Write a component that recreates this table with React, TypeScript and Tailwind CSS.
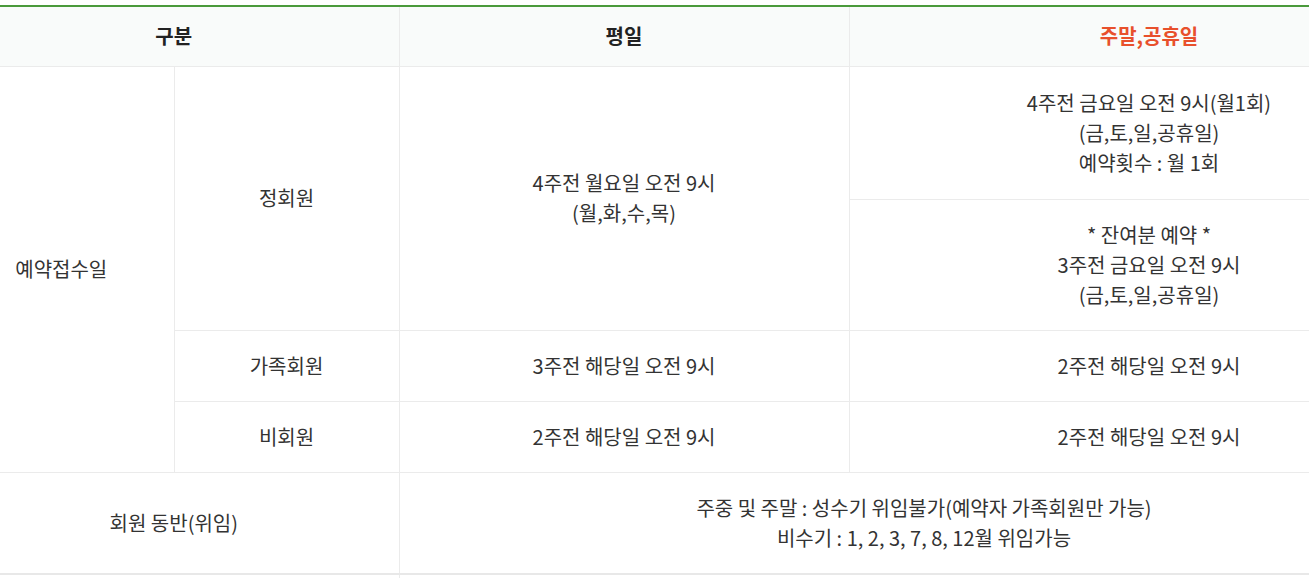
import React from 'react';

const cell = 'border border-[#ebebeb] text-center align-middle';

const App: React.FC = () => {
  return (
    <div className="w-full overflow-hidden bg-white pt-[5px] font-['Noto_Sans_CJK_KR','Noto_Sans',sans-serif] text-[20px] leading-[30px] text-[#333]">
      {/* table is wider than the window and scrolled a little to the right */}
      <table className="ml-[-51px] w-[1500px] table-fixed border-collapse border-t-2 border-t-[#4a9a3b]">
        <colgroup>
          <col className="w-[225px]" />
          <col className="w-[225px]" />
          <col className="w-[450px]" />
          <col className="w-[600px]" />
        </colgroup>
        <thead>
          <tr className="h-[60px] bg-[#f9fbfa]">
            <th colSpan={2} className={`${cell} border-l-0 border-t-0 font-bold text-[#222]`}>구분</th>
            <th className={`${cell} border-t-0 font-bold text-[#222]`}>평일</th>
            <th className={`${cell} border-t-0 font-bold text-[#e8502c]`}>주말,공휴일</th>
          </tr>
        </thead>
        <tbody>
          <tr className="h-[133px]">
            <td rowSpan={4} className={`${cell} border-l-0`}>예약접수일</td>
            <td rowSpan={2} className={cell}>정회원</td>
            <td rowSpan={2} className={cell}>
              4주전 월요일 오전 9시
              <br />
              (월,화,수,목)
            </td>
            <td className={cell}>
              4주전 금요일 오전 9시(월1회)
              <br />
              (금,토,일,공휴일)
              <br />
              예약횟수 : 월 1회
            </td>
          </tr>
          <tr className="h-[131px]">
            <td className={cell}>
              * 잔여분 예약 *
              <br />
              3주전 금요일 오전 9시
              <br />
              (금,토,일,공휴일)
            </td>
          </tr>
          <tr className="h-[71px]">
            <td className={cell}>가족회원</td>
            <td className={cell}>3주전 해당일 오전 9시</td>
            <td className={cell}>2주전 해당일 오전 9시</td>
          </tr>
          <tr className="h-[71px]">
            <td className={cell}>비회원</td>
            <td className={cell}>2주전 해당일 오전 9시</td>
            <td className={cell}>2주전 해당일 오전 9시</td>
          </tr>
          <tr className="h-[102px]">
            <td colSpan={2} className={`${cell} border-l-0 border-b-2 border-b-[#e8e8e8]`}>회원 동반(위임)</td>
            <td colSpan={2} className={`${cell} border-b-2 border-b-[#e8e8e8]`}>
              주중 및 주말 : 성수기 위임불가(예약자 가족회원만 가능)
              <br />
              비수기 : 1, 2, 3, 7, 8, 12월 위임가능
            </td>
          </tr>
          <tr className="h-[40px]">
            <td colSpan={2} className={`${cell} border-l-0`}></td>
            <td colSpan={2} className={cell}></td>
          </tr>
        </tbody>
      </table>
    </div>
  );
};

export default App;
